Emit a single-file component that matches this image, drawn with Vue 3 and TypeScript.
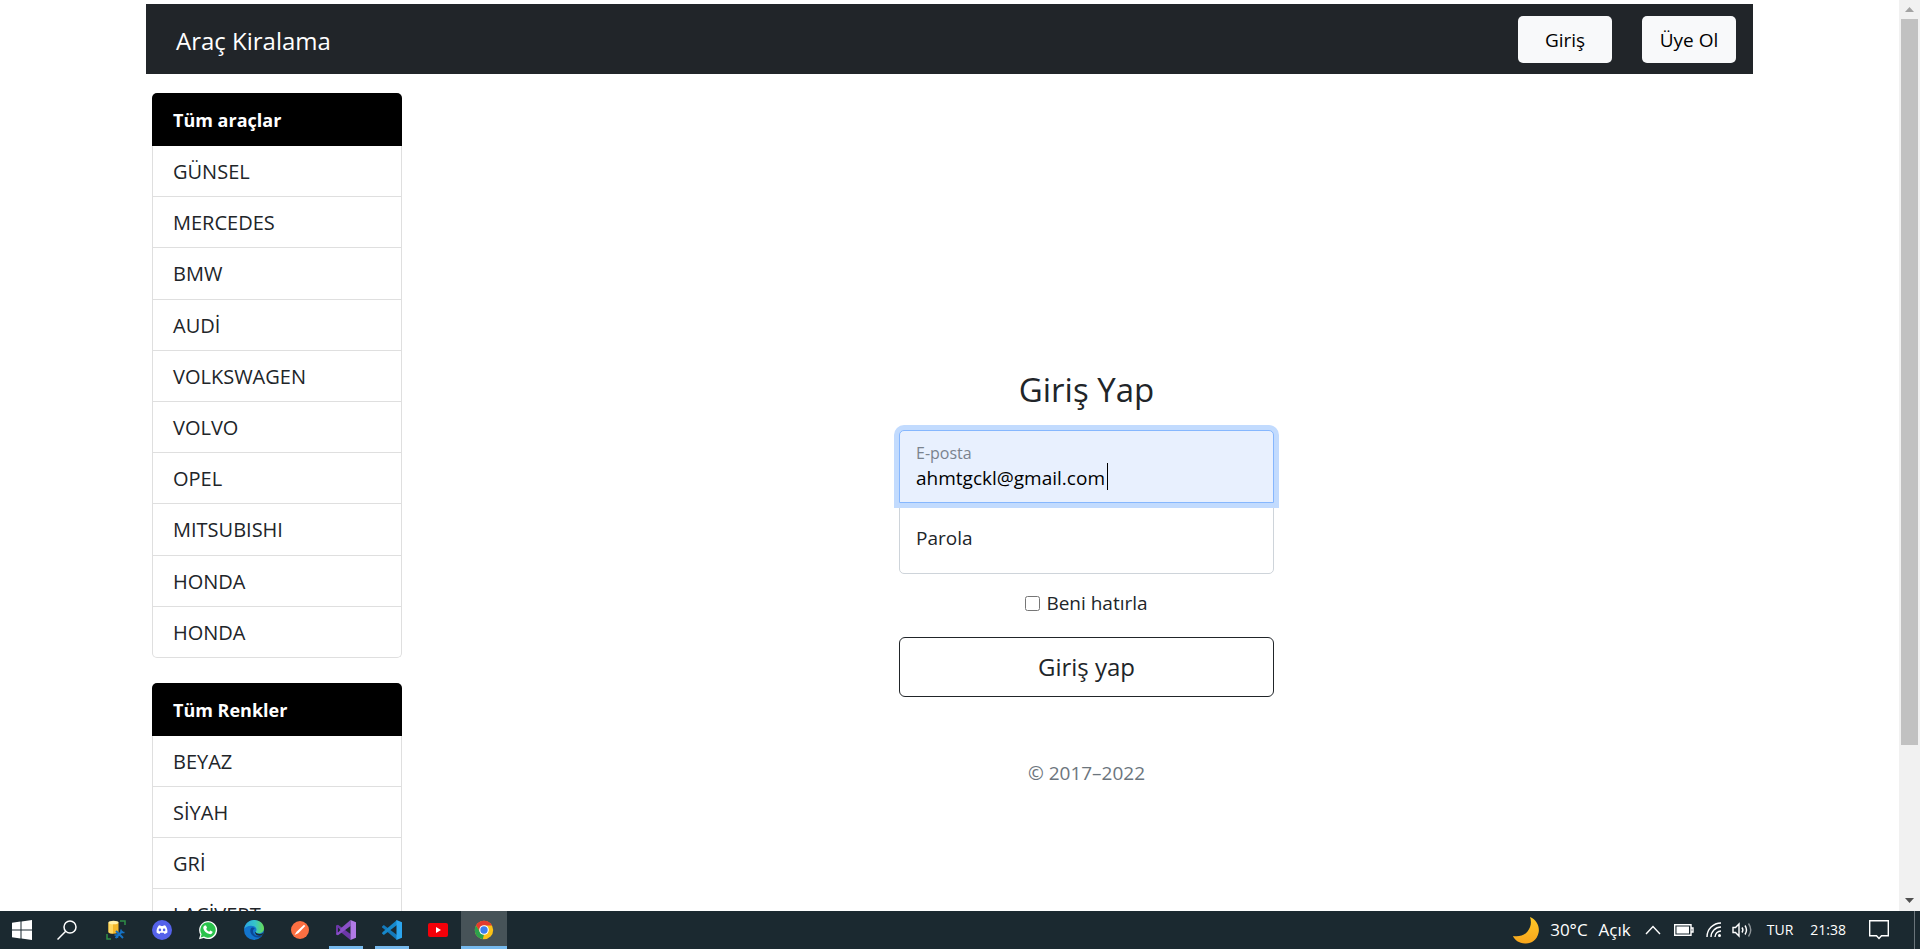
<script setup lang="ts">
import { ref } from 'vue'

const brands: string[] = [
  'GÜNSEL', 'MERCEDES', 'BMW', 'AUDİ', 'VOLKSWAGEN',
  'VOLVO', 'OPEL', 'MITSUBISHI', 'HONDA', 'HONDA',
]
const colors: string[] = ['BEYAZ', 'SİYAH', 'GRİ', 'LACİVERT']

const email = ref('ahmtgckl@gmail.com')
const password = ref('')
const remember = ref(false)
</script>

<template>
  <div class="desktop">
    <div class="browser">
      <div class="page">
        <header class="navbar">
          <a class="brand" href="#">Araç Kiralama</a>
          <nav class="nav-actions">
            <button type="button" class="btn-light">Giriş</button>
            <button type="button" class="btn-light">Üye Ol</button>
          </nav>
        </header>

        <div class="columns">
          <aside class="sidebar">
            <section class="group">
              <a class="group-title" href="#">Tüm araçlar</a>
              <ul class="list list-brands">
                <li v-for="(name, i) in brands" :key="i">{{ name }}</li>
              </ul>
            </section>
            <section class="group">
              <a class="group-title" href="#">Tüm Renkler</a>
              <ul class="list">
                <li v-for="name in colors" :key="name">{{ name }}</li>
              </ul>
            </section>
          </aside>

          <main class="content">
            <form class="signin" @submit.prevent>
              <h1>Giriş Yap</h1>
              <div class="field field-email">
                <label for="email">E-posta</label>
                <input id="email" v-model="email" type="email" autocomplete="off" />
                <span class="caret"></span>
              </div>
              <div class="field field-password">
                <label for="password">Parola</label>
                <input id="password" v-model="password" type="password" autocomplete="off" />
              </div>
              <div class="remember">
                <input id="remember" v-model="remember" type="checkbox" />
                <label for="remember">Beni hatırla</label>
              </div>
              <button type="submit" class="btn-submit">Giriş yap</button>
              <p class="copyright">© 2017–2022</p>
            </form>
          </main>
        </div>
      </div>

      <div class="scrollbar">
        <svg class="arrow arrow-up" viewBox="0 0 9 5"><path d="M0 5 4.500 0 9 5z" /></svg>
        <div class="thumb"></div>
        <svg class="arrow arrow-down" viewBox="0 0 9 5"><path d="M0 0h9L4.500 5z" /></svg>
      </div>
    </div>

    <footer class="taskbar">
      <div class="apps">
        <button type="button" class="app" aria-label="Start">
          <svg viewBox="0 0 20 20" fill="#fff"><path d="M0 2.800 8.500 1.500V9.500H0zM9.500 1.400 20 0v9.500H9.500zM0 10.500h8.500v8L0 17.200zM9.500 10.500H20V20L9.500 18.600z" /></svg>
        </button>
        <button type="button" class="app" aria-label="Search">
          <svg viewBox="0 0 20 20" fill="none" stroke="#fff" stroke-width="1.500"><circle cx="13" cy="7" r="6" /><path d="M8.700 11.300.5 19.500" /></svg>
        </button>
        <button type="button" class="app" aria-label="SQL Server">
          <svg viewBox="0 0 20 20">
            <path d="M14 1h5v4M1 14v5h4" fill="none" stroke="#2f8f46" stroke-width="1.500" />
            <path d="M2.500 2.500v9.500c0 2.200 10 2.200 10 0V2.500z" fill="#f2b72b" />
            <path d="M2.500 2.500V12c0 1.200 2 1.600 4.500 1.600V3z" fill="#ffd75e" />
            <ellipse cx="7.500" cy="2.500" rx="5" ry="1.800" fill="#fff0a8" />
            <path d="M9.500 18 16.500 11M10 11l7 7" stroke="#1673c5" stroke-width="2" />
            <path d="M15 9.500v3h3.500M8.500 15h3v3" fill="none" stroke="#1673c5" stroke-width="1.500" />
          </svg>
        </button>
        <button type="button" class="app" aria-label="Discord">
          <svg viewBox="0 0 20 20">
            <circle cx="10" cy="10" r="10" fill="#5562ea" />
            <path d="M6.800 5.600 8.200 5.300l.5.800h2.600l.5-.8 1.500.3c1.600 1.900 2.400 4.400 2.100 7-1 .8-1.900 1.200-2.900 1.400l-.8-1.200H8.300L7.500 14c-1-.2-2-.7-2.900-1.400-.3-2.600.6-5.100 2.200-7z" fill="#fff" />
            <circle cx="7.900" cy="9.900" r="1.300" fill="#5562ea" /><circle cx="12.100" cy="9.900" r="1.300" fill="#5562ea" />
          </svg>
        </button>
        <button type="button" class="app" aria-label="WhatsApp">
          <svg viewBox="0 0 20 20">
            <path d="M1 19.200 2.300 14.500A9 9 0 1 1 5.700 17.900z" fill="#fff" />
            <path d="M2.700 17.500 3.600 14.300A7.700 7.700 0 1 1 6 16.600z" fill="#2bc24c" />
            <path d="M6.800 5.500h1.200l1 2.300-.8 1.200c.8 1.400 1.600 2.100 3 2.800l1.100-1.300 2.300 1.200c0 2-1.700 2.700-3 2.400-3.200-.7-5.800-3.200-6.300-5.900-.1-1.100.6-2.300 1.500-2.700z" fill="#fff" />
          </svg>
        </button>
        <button type="button" class="app" aria-label="Edge">
          <svg viewBox="0 0 20 20">
            <defs>
              <linearGradient id="edge-top" x1="0" y1="0" x2="1" y2="0"><stop offset="0" stop-color="#2aa5e0" /><stop offset=".55" stop-color="#36c4c9" /><stop offset="1" stop-color="#69dc52" /></linearGradient>
            </defs>
            <circle cx="10" cy="10" r="10" fill="#1374cc" />
            <path d="M.2 9C1 3.500 5 0 10 0c6 0 10 4 10 8.500 0 3-2.300 4.800-5 4.800-2 0-3.400-.6-3.400-1.400 0-.5.900-.9.900-2.200C12.500 7.300 10 5.700 7 5.700 4 5.700 1.200 7 .2 9z" fill="url(#edge-top)" />
            <path d="M8 7.500c-3 1.500-2.500 9.500 6 10 1.500 0 3-.8 4.200-1.800-1.700.8-9.200 1-9.200-4.400 0-1.500.8-2.300 1.800-2.800-.7-.8-1.800-1.200-2.800-1z" fill="#0b4796" />
            <path d="M11.600 12c.5 2 5 2.800 8 .4l-1.300 2.900c-3 1-7 .2-7.300-3.100z" fill="#1b2930" />
          </svg>
        </button>
        <button type="button" class="app" aria-label="Postman">
          <svg viewBox="0 0 20 20"><circle cx="10" cy="10" r="9" fill="#fb6f42" /><path d="M4.500 15 6.500 11.800 14 4.800l1.300 1.300-7 7.100z" fill="#fff" /></svg>
        </button>
        <button type="button" class="app app-open" aria-label="Visual Studio">
          <svg viewBox="0 0 20 20"><path d="M0 5.500 2 4.700 14.500 14v6L3 10.800l-1 4.400-2-.9z" fill="#6c37a8" /><path d="M0 14.300 2 15.200 14.500 6V0L4 9z" fill="#8a50c8" /><path d="m14.500 0 5.500 2.300v15.400L14.500 20z" fill="#b17ae6" /><path d="M2 7.500v5L4.500 10z" fill="#1b2930" /></svg>
        </button>
        <button type="button" class="app app-open" aria-label="Visual Studio Code">
          <svg viewBox="0 0 20 20"><path d="M0 6.500 1.800 5l13.200 10v5L.2 7.500z" fill="#1479bb" /><path d="M0 13.500 1.800 15 15 5V0L.2 12.500z" fill="#1688cb" /><path d="m14.500 0 5.500 2.300v15.400L14.500 20z" fill="#2ca5ee" /></svg>
        </button>
        <button type="button" class="app" aria-label="YouTube">
          <svg viewBox="0 0 20 20"><rect y="3" width="20" height="14" rx="2" fill="#f40009" /><path d="M8 7v6l5-3z" fill="#fff" /></svg>
        </button>
        <button type="button" class="app app-open app-active" aria-label="Chrome">
          <svg viewBox="0 0 20 20">
            <circle cx="10" cy="10" r="9.200" fill="#fbc116" />
            <path d="M2 5.500A9.200 9.200 0 0 1 18 5.500H10L6.100 12.300z" fill="#e33b2e" />
            <path d="M2 5.400 6.200 12.300 10 14.500l-1.200 4.700A9.200 9.200 0 0 1 2 5.400z" fill="#2da14c" />
            <circle cx="10" cy="10" r="4.800" fill="#fff" /><circle cx="10" cy="10" r="3.700" fill="#3c7ded" />
          </svg>
        </button>
      </div>

      <div class="tray">
        <svg class="moon" viewBox="0 0 28 28">
          <defs><linearGradient id="moon-fill" x1="0" y1="0" x2="0" y2="1"><stop offset="0" stop-color="#ffc928" /><stop offset="1" stop-color="#f8a51c" /></linearGradient></defs>
          <path d="M18 1C25 4 28 11 26.500 17 25 24 19 28 13 27.500 7 27.200 2.500 24 1 20c5 1 11 0 14.500-4.500C19 11 19.700 6 18 1z" fill="url(#moon-fill)" />
        </svg>
        <span class="temp">30°C</span>
        <span class="sky">Açık</span>
        <svg class="chevron" viewBox="0 0 16 10"><path d="m1 9 7-7.500L15 9" /></svg>
        <svg class="battery" viewBox="0 0 20 12"><path d="M.700.700h16.300v10.600H.700zM17.500 4h1.500v4h-1.500" /><path class="solid" d="M2.500 2.500h12.500v7H2.500z" /></svg>
        <svg class="wifi" viewBox="0 0 16 16"><path d="M1 15A14 14 0 0 1 15 1M5 15A10 10 0 0 1 15 5M9 15a6 6 0 0 1 6-6" /><circle class="solid" cx="13.500" cy="13.500" r="1.500" /></svg>
        <svg class="sound" viewBox="0 0 22 16"><path d="M1 5.500h2.500L7 2v12l-3.500-3.500H1z" /><path d="M10 5.500q1.800 2.500 0 5M13 3.500q3 4.500 0 9" /><path opacity=".5" d="M16.500 1.500q4.500 6.500 0 13" /></svg>
        <span class="lang">TUR</span>
        <span class="clock">21:38</span>
        <svg class="notice" viewBox="0 0 20 20"><path d="M.700.700h18.600v15h-6.800L10 18.500l-2.500-2.800H.7z" /></svg>
        <i class="peek"></i>
      </div>
    </footer>
  </div>
</template>

<style>
body {
  margin: 0;
  background: #fff;
}
</style>

<style scoped>
.desktop {
  display: flex;
  flex-direction: column;
  height: 100vh;
  overflow: hidden;
  font-family: "Open Sans", "Noto Sans", sans-serif;
  font-size: 19px;
  line-height: 30px;
  color: #212529;
}
.desktop *,
.desktop *::before {
  box-sizing: border-box;
}
button,
input {
  font: inherit;
  color: inherit;
}
a {
  color: inherit;
  text-decoration: none;
}
.browser {
  flex: 1;
  min-height: 0;
  display: flex;
}
.page {
  flex: 1;
  min-width: 0;
  overflow: hidden;
  padding: 4px 146px 0;
}

.navbar {
  display: flex;
  align-items: center;
  justify-content: space-between;
  height: 70px;
  padding: 0 17px 0 30px;
  background: #212529;
}
.brand {
  padding-top: 4px;
  color: #fff;
  font-size: 24px;
}
.nav-actions {
  display: flex;
  gap: 30px;
}
.btn-light {
  width: 94px;
  height: 47px;
  padding: 2px 0 0;
  border: 0;
  border-radius: 5px;
  background: #f8f9fa;
  color: #000;
}

.columns {
  display: flex;
  gap: 18px;
  padding-left: 6px;
  margin-top: 19px;
}
.sidebar {
  width: 250px;
  flex: none;
  display: flex;
  flex-direction: column;
  gap: 25px;
}
.group-title {
  display: block;
  padding: 12px 21px 11px;
  border-radius: 5px 5px 0 0;
  background: #000;
  color: #fff;
  font-size: 18px;
  font-weight: 700;
}
.list {
  display: flex;
  flex-direction: column;
  margin: 0;
  padding: 0;
  list-style: none;
  border: 1px solid #dfdfdf;
  border-top: 0;
  border-radius: 0 0 5px 5px;
}
.list-brands {
  min-height: 512px;
}
.list li {
  flex: 1 0 auto;
  padding: 11px 20px 9px;
  font-size: 20px;
  font-weight: 500;
}
.list li + li {
  border-top: 1px solid #dfdfdf;
}

.content {
  flex: 1;
  display: flex;
  justify-content: center;
  align-items: flex-start;
}
.signin {
  width: 375px;
  margin-top: 276px;
  text-align: center;
}
h1 {
  margin: 0 0 19px;
  font-size: 33px;
  line-height: 42px;
  font-weight: 400;
}
.field {
  position: relative;
  text-align: left;
}
.field input {
  display: block;
  width: 100%;
  height: 73px;
  padding: 23px 16px 0;
  border: 1px solid #ced4da;
  outline: 0;
  background: #fff;
}
.field label {
  position: absolute;
  left: 17px;
  top: 21px;
}
.field-email {
  z-index: 1;
}
.field-email input {
  border-color: #86b7fe;
  border-radius: 5px 5px 0 0;
  background: #e8f0fe;
  color: #000;
  box-shadow: 0 0 0 5px #c2dbfe;
}
.field-email label {
  top: 8px;
  font-size: 16px;
  color: #7b838e;
}
.caret {
  position: absolute;
  left: 208px;
  top: 33px;
  width: 1px;
  height: 27px;
  background: #000;
}
.field-password {
  margin-top: -1px;
}
.field-password input {
  height: 72px;
  border-radius: 0 0 5px 5px;
}
.remember {
  display: flex;
  align-items: center;
  justify-content: center;
  gap: 6px;
  margin: 14px 0 19px;
}
.remember input {
  width: 15px;
  height: 15px;
  margin: 0;
}
.btn-submit {
  display: block;
  width: 100%;
  height: 60px;
  padding: 0;
  border: 1px solid #212529;
  border-radius: 6px;
  background: #fff;
  font-size: 24px;
}
.copyright {
  margin: 61px 0 0;
  color: #6c757d;
}

.scrollbar {
  width: 21px;
  flex: none;
  display: flex;
  flex-direction: column;
  align-items: center;
  padding: 7px 0 8px;
  background: #f1f1f1;
}
.arrow {
  width: 9px;
  height: 5px;
  flex: none;
  fill: #505050;
}
.arrow-up {
  fill: #a3a3a3;
}
.arrow-down {
  margin-top: auto;
}
.thumb {
  width: 17px;
  height: 81%;
  margin-top: 7px;
  background: #c1c1c1;
}

.taskbar {
  display: flex;
  justify-content: space-between;
  flex: none;
  height: 38px;
  background: #1b2930;
  color: #fff;
  font-size: 15px;
}
.apps {
  display: flex;
}
.app {
  position: relative;
  display: flex;
  align-items: center;
  justify-content: center;
  width: 46px;
  padding: 0;
  border: 0;
  background: none;
}
.app:first-child {
  width: 44px;
}
.app:nth-child(2) {
  margin-right: 3px;
}
.app svg {
  width: 20px;
  height: 20px;
}
.app-open::before {
  content: "";
  position: absolute;
  left: 6px;
  right: 6px;
  bottom: 0;
  height: 3px;
  background: #76b9ed;
}
.app-active {
  background: #475358;
}
.app-active::before {
  left: 0;
  right: 0;
}
.tray {
  display: flex;
  align-items: center;
}
.tray svg {
  fill: none;
  stroke: #fff;
  stroke-width: 1.400;
}
.tray .solid {
  fill: #fff;
  stroke: none;
}
.tray .moon {
  width: 28px;
  height: 28px;
  margin-right: 10px;
  stroke: none;
}
.temp,
.sky {
  font-size: 17px;
}
.sky {
  margin: 0 14px 0 11px;
}
.chevron {
  width: 16px;
  height: 10px;
}
.battery {
  width: 20px;
  height: 12px;
  margin: 0 12px 0 13px;
}
.wifi {
  width: 16px;
  height: 16px;
}
.sound {
  width: 22px;
  height: 16px;
  margin: 0 13px 0 10px;
}
.clock {
  margin: 0 23px 0 17px;
}
.lang,
.clock {
  font-size: 14px;
}
.notice {
  width: 20px;
  height: 20px;
}
.peek {
  width: 1px;
  height: 38px;
  margin: 0 5px 0 25px;
  background: #6a747a;
}
</style>
